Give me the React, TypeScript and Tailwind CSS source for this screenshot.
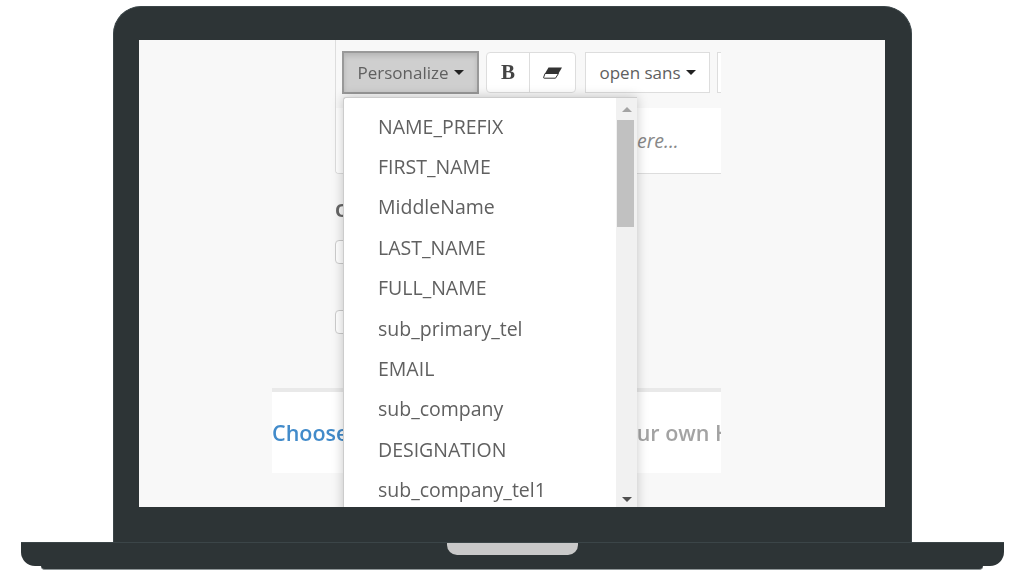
const FIELDS = [
  "NAME_PREFIX",
  "FIRST_NAME",
  "MiddleName",
  "LAST_NAME",
  "FULL_NAME",
  "sub_primary_tel",
  "EMAIL",
  "sub_company",
  "DESIGNATION",
  "sub_company_tel1",
];

const caret = "inline-block h-0 w-0 border-x-[5px] border-t-[5px] border-x-transparent border-t-[#222]";

function EraserIcon() {
  return (
    <svg width="20" height="12" viewBox="0 0 20 12" aria-hidden="true">
      <path d="M5.5 0.5H19L15.5 6.5H2Z" fill="#333" />
      <path d="M2 6.5H15.5L12.5 11.2H1.2C0.6 11.2 0.4 10.8 0.7 10.2Z" fill="#fff" stroke="#333" strokeWidth="1" />
    </svg>
  );
}

function Toolbar() {
  return (
    <div className="flex h-[68px] shrink-0 pl-[6px] pt-[11px] text-[17px] text-[#606060]">
      <button className="flex h-[43px] w-[137px] shrink-0 items-center justify-center gap-[5px] border-2 border-[#999] bg-[#cfcfcf] shadow-[inset_0_3px_5px_rgba(0,0,0,0.125)]">
        Personalize <span className={caret} />
      </button>
      <div className="ml-[7px] mt-[1px] flex h-[41px] w-[90px] shrink-0 rounded-[4px] border border-[#ddd] bg-white">
        <span className="flex w-[43px] items-center justify-center border-r border-[#ddd] font-['Liberation_Serif',serif] text-[21px] font-bold text-[#444]">
          B
        </span>
        <span className="flex flex-1 items-center justify-center">
          <EraserIcon />
        </span>
      </div>
      <button className="ml-[9px] mt-[1px] flex h-[41px] w-[125px] shrink-0 items-center justify-center gap-[5px] border border-[#ddd] bg-white">
        open sans <span className={caret} />
      </button>
      <div className="ml-[7px] mt-[1px] h-[41px] w-[40px] shrink-0 border border-[#ddd] bg-white" />
    </div>
  );
}

function PersonalizeMenu() {
  return (
    <div className="absolute left-[204px] top-[57px] flex h-[420px] w-[294px] rounded-tl-[3px] border-l border-t border-[#ccc] bg-white shadow-[0_0_12px_rgba(0,0,0,0.22)]">
      <ul className="flex-1 pt-[8px] text-[19.5px] text-[#606060]">
        {FIELDS.map((field) => (
          <li key={field} className="flex h-[40.4px] items-center pl-[34px]">
            {field}
          </li>
        ))}
      </ul>
      <div className="flex w-[21px] shrink-0 flex-col items-center bg-[#f1f1f1]">
        <span className="mt-[9px] h-0 w-0 border-x-[5px] border-b-[5px] border-x-transparent border-b-[#a3a3a3]" />
        <span className="mr-[2px] mt-[8px] h-[107px] w-[17px] bg-[#c1c1c1]" />
        <span className="mt-[270px] h-0 w-0 border-x-[5px] border-t-[5px] border-x-transparent border-t-[#505050]" />
      </div>
    </div>
  );
}

export default function App() {
  return (
    <div className="h-[576px] w-[1024px] overflow-hidden bg-white font-['Open_Sans',sans-serif]">
      {/* Laptop lid */}
      <div className="ml-[113px] mt-[6px] h-[536px] w-[799px] rounded-t-[28px] border border-b-0 border-[#3b4548] bg-[#2d3436] pl-[25px] pt-[33px]">
        <div className="h-[467px] w-[746px] overflow-hidden bg-[#f8f8f8]">
          <div className="relative h-full blur-[0.4px]">
            <div className="ml-[133px] flex w-[449px] flex-col">
              {/* Editor */}
              <div className="ml-[63px] flex h-[134px] w-[386px] flex-col overflow-hidden rounded-bl-[4px] border-b border-l border-[#ddd]">
                <Toolbar />
                <div className="flex flex-1 items-center bg-white pl-[164px] text-[19.5px] italic text-[#888]">
                  Type your text here...
                </div>
              </div>

              <div className="ml-[63px] mt-[24px] text-[18px] font-bold leading-[24px] text-[#666]">Options</div>
              <div className="ml-[63px] mt-[18px] h-[24px] w-[40px] rounded-[4px] border border-[#ccc] bg-white" />
              <div className="ml-[63px] mt-[46px] h-[24px] w-[40px] rounded-[4px] border border-[#ccc] bg-white" />

              {/* Template chooser */}
              <div className="mt-[54px] h-[4px] bg-[#e9e9e9]" />
              <div className="flex h-[81px] items-center overflow-hidden whitespace-nowrap bg-white pt-[2px] text-[21.5px] font-semibold text-[#a3a3a3]">
                <span className="w-[340px] shrink-0 text-[#428bca]">Choose</span>
                <span>your own HTML</span>
              </div>
            </div>
            <PersonalizeMenu />
          </div>
        </div>
      </div>

      {/* Laptop base */}
      <div className="ml-[21px] flex h-[24px] w-[983px] justify-center rounded-b-[14px] border-t border-[#3b4548] bg-[#2d3436]">
        <div className="h-[12px] w-[131px] rounded-b-[10px] bg-[#c9c9c9]" />
      </div>
      <div className="ml-[41px] h-[4px] w-[942px] rounded-b-[4px] border-b border-[#8f9698] bg-[#2d3436]" />
    </div>
  );
}
